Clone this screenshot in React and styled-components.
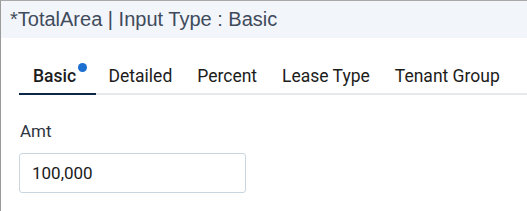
import React from 'react';
import styled, { createGlobalStyle } from 'styled-components';

//reset page
const GlobalStyle = createGlobalStyle`
  html, body {
    margin: 0;
    padding: 0;
    background: #ffffff;
  }
`;

//outer frame with thin grey edges
const Frame = styled.div`
  width: 527px;
  height: 211px;
  box-sizing: border-box;
  border-left: 1px solid #9a9a9a;
  border-top: 1px solid #a8a8a8;
  background: #ffffff;
  overflow: hidden;
`;

//title bar
const Header = styled.div`
  height: 37px;
  background: #f2f5f9;
  display: flex;
  align-items: center;
  padding-left: 9px;
  font-family: "Liberation Sans", Arial, sans-serif;
  font-size: 20px;
  color: #3f4b5c;
`;

//tab strip
const TabBar = styled.div`
  display: flex;
  margin: 21px 0 0 18px;
  border-bottom: 2px solid #e6e9ed;
`;

const Tab = styled.div`
  position: relative;
  padding: 0 ${(p) => (p.dot ? '20px' : '12.5px')} 0 ${(p) => (p.first ? '14px' : '12.5px')};
  height: 34px;
  line-height: 34px;
  font-family: Roboto, "Liberation Sans", sans-serif;
  font-size: 17.5px;
  font-weight: ${(p) => (p.active ? 500 : 400)};
  color: #1c1c1c;
  margin-bottom: -2px;
  border-bottom: 2px solid ${(p) => (p.active ? '#0d2547' : 'transparent')};
`;

//little blue dot on the active tab
const Dot = styled.span`
  position: absolute;
  top: 4px;
  right: 9px;
  width: 9px;
  height: 9px;
  border-radius: 50%;
  background: #1b6fd0;
`;

const Body = styled.div`
  padding: 26px 0 0 18px;
  font-family: Roboto, "Liberation Sans", sans-serif;
`;

const Label = styled.div`
  font-size: 17px;
  line-height: 20px;
  color: #2f3540;
  margin: 0 0 12px 1px;
`;

const Input = styled.input`
  box-sizing: border-box;
  width: 227px;
  height: 40px;
  border: 1px solid #c9d6e0;
  border-radius: 3px;
  padding: 0 12px;
  font-family: Roboto, "Liberation Sans", sans-serif;
  font-size: 17px;
  color: #1a1a1a;
  outline: none;
`;

const tabs = ['Basic', 'Detailed', 'Percent', 'Lease Type', 'Tenant Group'];

const App = () => {
  return (
    <Frame>
      <GlobalStyle />
      <Header>*TotalArea | Input Type : Basic</Header>
      <TabBar>
        {tabs.map((t, i) => (
          <Tab key={t} first={i === 0} active={i === 0} dot={i === 0}>
            {t}
            {i === 0 ? <Dot /> : null}
          </Tab>
        ))}
      </TabBar>
      <Body>
        <Label>Amt</Label>
        <Input defaultValue="100,000" />
      </Body>
    </Frame>
  );
};

export default App;
